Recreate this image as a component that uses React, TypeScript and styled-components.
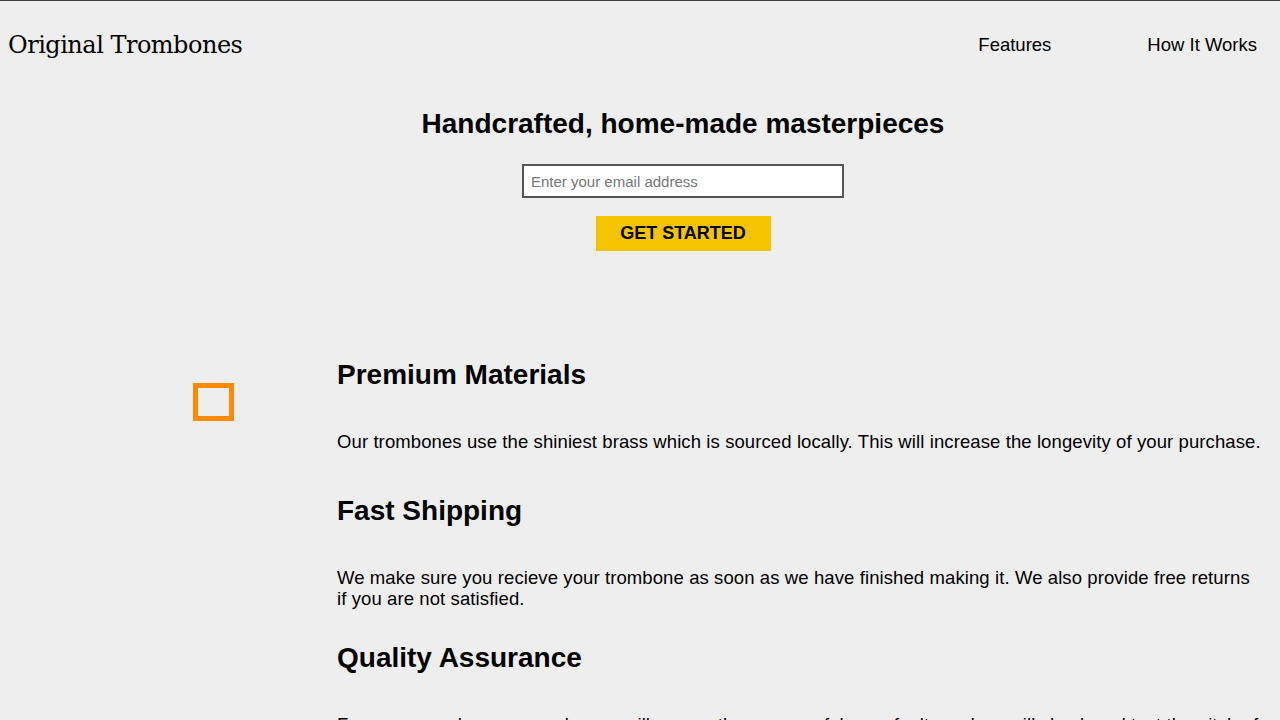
import React from "react";
import styled, { createGlobalStyle } from "styled-components";

const GlobalStyle = createGlobalStyle`
  html, body {
    margin: 0;
    padding: 0;
    background-color: #eeeeee;
  }
  body {
    border-top: 1px solid #3c3c3c;
    font-family: "Liberation Sans", Arial, Helvetica, sans-serif;
    color: #000;
    overflow: hidden;
  }
`;

const Header = styled.header`
  display: flex;
  justify-content: space-between;
  align-items: center;
  height: 87px;
  padding: 0 23px 0 8px;
`;

const Logo = styled.div`
  font-family: "DejaVu Serif", Georgia, serif;
  font-size: 24px;
  letter-spacing: -0.5px;
`;

const NavList = styled.ul`
  list-style-type: none;
  display: flex;
  gap: 96px;
  margin: 1px 0 0;
  padding: 0;
`;

const NavLink = styled.a`
  font-size: 18.5px;
  color: #000;
  text-decoration: none;
`;

const Main = styled.main`
  padding-left: 86px;
`;

const Hero = styled.section`
  display: flex;
  flex-direction: column;
  align-items: center;
  padding-top: 20px;
`;

const Title = styled.h1`
  font-size: 28px;
  line-height: 32px;
  font-weight: bold;
  margin: 0 0 24px;
`;

const EmailInput = styled.input`
  box-sizing: border-box;
  width: 322px;
  height: 34px;
  border: 2px solid #555;
  background: #fff;
  padding: 0 7px;
  font-family: "Liberation Sans", Arial, sans-serif;
  font-size: 15px;
  &::placeholder {
    color: #777;
  }
`;

const StartButton = styled.button`
  margin-top: 18px;
  width: 175px;
  height: 35px;
  border: none;
  background-color: #f5c400;
  font-family: "Liberation Sans", Arial, sans-serif;
  font-weight: bold;
  font-size: 18px;
  color: #000;
`;

const Features = styled.section`
  margin-top: 81px;
`;

const FeatureRow = styled.div`
  display: flex;
  align-items: center;
  height: 147px;
`;

const IconCell = styled.div`
  width: 251px;
  flex-shrink: 0;
  display: flex;
  justify-content: center;
  padding-left: 4px;
  box-sizing: border-box;
`;

const BoxIcon = styled.div`
  box-sizing: border-box;
  width: 41px;
  height: 38px;
  margin-bottom: 8px;
  border: 5px solid #ff8a00;
`;

const Description = styled.div`
  flex: 1;
  padding-right: 18px;
`;

const FeatureTitle = styled.h2`
  font-size: 28px;
  line-height: 30px;
  margin: 0 0 41px;
`;

const FeatureText = styled.p`
  font-size: 18.5px;
  letter-spacing: 0.1px;
  line-height: 21px;
  margin: 0;
`;

const features = [
  {
    title: "Premium Materials",
    text: "Our trombones use the shiniest brass which is sourced locally. This will increase the longevity of your purchase.",
    icon: true,
  },
  {
    title: "Fast Shipping",
    text: "We make sure you recieve your trombone as soon as we have finished making it. We also provide free returns if you are not satisfied.",
    icon: false,
  },
  {
    title: "Quality Assurance",
    text: "For every purchase you make, we will ensure there are no falws or faults and we will check and test the pitch of your instrument.",
    icon: false,
  },
];

const App = () => {
  return (
    <>
      <GlobalStyle />
      <Header>
        <Logo>Original Trombones</Logo>
        <nav>
          <NavList>
            <li>
              <NavLink href="#features">Features</NavLink>
            </li>
            <li>
              <NavLink href="#how-it-works">How It Works</NavLink>
            </li>
          </NavList>
        </nav>
      </Header>
      <Main>
        <Hero>
          <Title>Handcrafted, home-made masterpieces</Title>
          <EmailInput type="email" placeholder="Enter your email address" />
          <StartButton>GET STARTED</StartButton>
        </Hero>
        <Features>
          {features.map((f) => (
            <FeatureRow key={f.title}>
              <IconCell>{f.icon && <BoxIcon />}</IconCell>
              <Description>
                <FeatureTitle>{f.title}</FeatureTitle>
                <FeatureText>{f.text}</FeatureText>
              </Description>
            </FeatureRow>
          ))}
        </Features>
      </Main>
    </>
  );
};

export default App;
